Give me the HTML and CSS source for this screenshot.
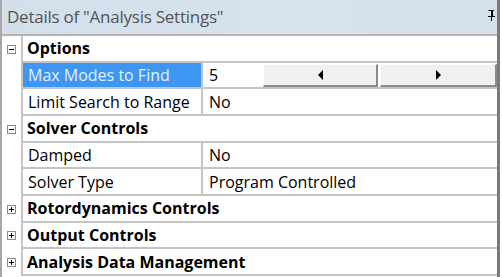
FILE: index.html
```html
<!DOCTYPE html>
<html lang="en">
<head>
    <meta charset="UTF-8">
    <title>Details of "Analysis Settings"</title>
    <link rel="stylesheet" href="styles.css">
</head>
<body>
    <div class="panel">
        <div class="title-bar">
            <span class="title">Details of "Analysis Settings"</span>
            <svg class="pin" width="8" height="11" viewBox="0 0 8 11">
                <path d="M1 0h6v1h-1v5h2v1h-3v4h-1v-4h-3v-1h2v-5h-1z" fill="#000"/>
                <rect x="3" y="1" width="1" height="5" fill="#fff"/>
            </svg>
        </div>

        <div class="grid">
            <div class="row group">
                <div class="toggle"><span class="box minus"></span></div>
                <div class="name">Options</div>
            </div>
            <div class="row selected">
                <div class="toggle"></div>
                <div class="name">Max Modes to Find</div>
                <div class="value spin">
                    <span class="num">5</span>
                    <button class="step"><span class="arrow left"></span></button>
                    <button class="step"><span class="arrow right"></span></button>
                </div>
            </div>
            <div class="row">
                <div class="toggle"></div>
                <div class="name">Limit Search to Range</div>
                <div class="value">No</div>
            </div>
            <div class="row group">
                <div class="toggle"><span class="box minus"></span></div>
                <div class="name">Solver Controls</div>
            </div>
            <div class="row">
                <div class="toggle"></div>
                <div class="name">Damped</div>
                <div class="value">No</div>
            </div>
            <div class="row">
                <div class="toggle"></div>
                <div class="name">Solver Type</div>
                <div class="value">Program Controlled</div>
            </div>
            <div class="row group">
                <div class="toggle"><span class="box plus"></span></div>
                <div class="name">Rotordynamics Controls</div>
            </div>
            <div class="row group">
                <div class="toggle"><span class="box plus"></span></div>
                <div class="name">Output Controls</div>
            </div>
            <div class="row group">
                <div class="toggle"><span class="box plus"></span></div>
                <div class="name">Analysis Data Management</div>
            </div>
        </div>
    </div>
</body>
</html>
```

FILE: styles.css
```css
body {
    margin: 0;
    padding: 0;
    background-color: #fff;
    font-family: 'Open Sans', sans-serif;
}

.panel {
    width: 495px;
    height: 277px;
    border-left: 2px solid #a8a8a8;
    border-right: 3px solid #7a7a7a;
    overflow: hidden;
}

.title-bar {
    height: 34px;
    display: flex;
    align-items: center;
    justify-content: space-between;
    padding: 0 2px 0 5px;
    background: linear-gradient(to right, #d3dfeb, #d6e2ee 60%, #d4e0ec);
    border-bottom: 2px solid #b4b4b4;
}

.title {
    color: #545454;
    font-size: 17px;
    letter-spacing: -0.25px;
    padding-bottom: 2px;
}

.pin {
    margin-bottom: 3px;
}

.grid {
    display: flex;
    flex-direction: column;
}

.row {
    display: flex;
    height: 24.67px;
    border-bottom: 2px solid #c4c4c4;
    font-size: 16px;
    color: #000;
}

.toggle {
    width: 19px;
    flex-shrink: 0;
    background-color: #fff;
    border-right: 2px solid #c4c4c4;
    margin-bottom: -2px;
    display: flex;
    align-items: center;
    justify-content: center;
}

.name {
    width: 173px;
    flex-shrink: 0;
    padding-left: 5px;
    display: flex;
    align-items: center;
    border-right: 2px solid #c4c4c4;
    white-space: nowrap;
}

.group .name {
    font-weight: bold;
    border-right: none;
    width: auto;
    padding-left: 4px;
}

.value {
    flex: 1;
    padding-left: 6px;
    display: flex;
    align-items: center;
    white-space: nowrap;
}

.selected .name {
    background-color: #3d97f2;
    color: #e4f1ff;
}

.box {
    width: 7px;
    height: 7px;
    border: 1px solid #8c8c8c;
    position: relative;
    background: #fff;
}

.box::before,
.box::after {
    content: '';
    position: absolute;
    background: #000;
}

.box::before {
    left: 1px;
    top: 3px;
    width: 5px;
    height: 1px;
}

.plus::after {
    left: 3px;
    top: 1px;
    width: 1px;
    height: 5px;
}

.spin {
    align-items: stretch;
}

.num {
    width: 54px;
    flex-shrink: 0;
    display: flex;
    align-items: center;
}

.step {
    width: 115px;
    margin: 1px 2px 0 0;
    padding: 0;
    background-color: #f0f0f0;
    border-top: 1px solid #fff;
    border-left: 1px solid #fff;
    border-right: 2px solid #8a8a8a;
    border-bottom: 2px solid #8a8a8a;
    display: flex;
    align-items: center;
    justify-content: center;
}

.step:last-child {
    flex: 1;
    margin-right: 0;
}

.arrow {
    width: 0;
    height: 0;
    border-top: 5px solid transparent;
    border-bottom: 5px solid transparent;
}

.arrow.left {
    border-right: 5px solid #000;
}

.arrow.right {
    border-left: 5px solid #000;
}
```
